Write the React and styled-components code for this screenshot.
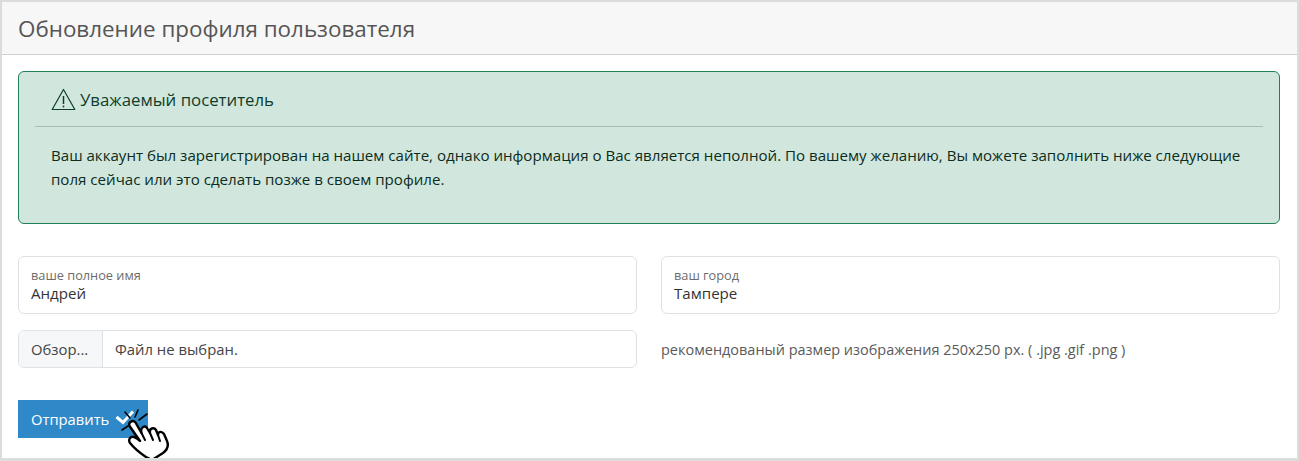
import React from "react";
import styled, { createGlobalStyle } from "styled-components";

const Global = createGlobalStyle`
  html, body { margin: 0; padding: 0; background: #dcdcdc; }
  body { font-family: "Open Sans", "Noto Sans", "Liberation Sans", sans-serif; color: #212529; }
  * { box-sizing: border-box; }
`;

const Card = styled.div`
  width: 1299px;
  height: 461px;
  padding: 2px 2px 3px 2px;
  background: #dcdcdc;
`;
const Inner = styled.div`
  height: 100%;
  display: flex;
  flex-direction: column;
  background: #fff;
  overflow: hidden;
`;
const Header = styled.div`
  height: 53px;
  flex: none;
  padding: 0 16px;
  display: flex;
  align-items: center;
  background: #f7f7f7;
  border-bottom: 1px solid #d0d0d0;
`;
const Title = styled.h1`
  margin: 0;
  font-size: 22.4px;
  font-weight: 400;
  color: #555;
`;
const Body = styled.div`
  flex: 1;
  padding: 16px 17px 0 16px;
  display: flex;
  flex-direction: column;
`;
const Alert = styled.div`
  height: 153px;
  flex: none;
  border: 1px solid #218056;
  border-radius: 6px;
  background: #d1e7dd;
  color: #0f3d2b;
  padding: 0 16px;
  display: flex;
  flex-direction: column;
`;
const AlertHead = styled.div`
  height: 55px;
  flex: none;
  padding-left: 16px;
  display: flex;
  align-items: center;
  gap: 4px;
  font-size: 16.8px;
  border-bottom: 1px solid #a3bfb3;
`;
const AlertText = styled.p`
  margin: 16px 0 0;
  padding-left: 16px;
  font-size: 15.1px;
  line-height: 24px;
  color: #0c2c20;
`;
const Row = styled.div`
  display: grid;
  grid-template-columns: 619px 619px;
  column-gap: 24px;
  align-items: center;
  margin-top: ${p => p.$top}px;
`;
const Field = styled.div`
  height: 58px;
  border: 1px solid #dee2e6;
  border-radius: 6px;
  padding: 10px 12px 0;
  display: flex;
  flex-direction: column;
`;
const FieldLabel = styled.span`
  font-size: 12.75px;
  line-height: 16px;
  color: #6c6c6c;
`;
const FieldValue = styled.span`
  font-size: 15.1px;
  line-height: 21px;
  color: #333;
`;
const FileBox = styled.div`
  height: 38px;
  border: 1px solid #dee2e6;
  border-radius: 6px;
  display: flex;
  align-items: center;
  overflow: hidden;
  font-size: 14.85px;
  color: #444;
`;
const FileButton = styled.span`
  width: 84px;
  height: 100%;
  display: flex;
  align-items: center;
  padding-left: 12px;
  background: #f6f7f9;
  border-right: 1px solid #dee2e6;
`;
const FileName = styled.span`
  padding-left: 12px;
`;
const Hint = styled.span`
  font-size: 14.47px;
  color: #5a5a5a;
`;
const SubmitWrap = styled.div`
  position: relative;
  margin-top: 32px;
  width: 130px;
`;
const Submit = styled.button`
  width: 130px;
  height: 38px;
  border: 0;
  padding: 0 0 0 13px;
  display: flex;
  align-items: center;
  background: #2f89c8;
  color: #fff;
  font: inherit;
  font-size: 14.75px;
`;
const Cursor = styled.svg`
  position: absolute;
  left: 90px;
  top: 5px;
  width: 70px;
  height: 56px;
`;

const Warning = () => (
  <svg width="25" height="23" viewBox="0 0 25 23" fill="none" stroke="#0f3d2b">
    <path d="M12.5 1.5 L23.8 21.5 H1.2 Z" strokeWidth="1.2" strokeLinejoin="round" />
    <path d="M12.5 8 V16" strokeWidth="1.5" />
    <path d="M12.5 17.6 V19.4" strokeWidth="1.5" />
  </svg>
);

const Hand = () => (
  <Cursor viewBox="108 405 70 56" fill="none">
    <path d="M116.5 417 L123 422.5 L133 411.5" stroke="#fff" strokeWidth="3" />
    <g stroke="#000" strokeWidth="1.6" strokeLinecap="round">
      <path d="M125 412 L130 418" />
      <path d="M138 410 L135 417" />
      <path d="M147 414 L139 420" />
      <path d="M122 430 L128 426" />
    </g>
    <path
      d="M129.5 426 C128 422 133 419.5 135.5 422.5 L141.5 433 C140 427 145 425 147 428 L150 433 C149 428 154 427 156 430 L158 435 C158 431 162 431 164 434 L167 441 C169 446 167 450 163 453 L152 460 L146 457 C140 453 134 448 130 443 C128 440 130 436 134 437 C136 437.5 138 439 140 441 Z"
      fill="#fff"
      stroke="#000"
      strokeWidth="2.4"
      strokeLinejoin="round"
    />
    <path d="M141.5 433 L145 440 M150 433 L153 440 M158 435 L160 441" stroke="#000" strokeWidth="2" strokeLinecap="round" />
  </Cursor>
);

export default function App() {
  return (
    <>
      <Global />
      <Card>
        <Inner>
          <Header>
            <Title>Обновление профиля пользователя</Title>
          </Header>
          <Body>
            <Alert>
              <AlertHead>
                <Warning />
                Уважаемый посетитель
              </AlertHead>
              <AlertText>
                Ваш аккаунт был зарегистрирован на нашем сайте, однако информация о Вас является неполной. По вашему желанию, Вы можете заполнить ниже следующие поля сейчас или это сделать позже в своем профиле.
              </AlertText>
            </Alert>
            <Row $top={32}>
              <Field>
                <FieldLabel>ваше полное имя</FieldLabel>
                <FieldValue>Андрей</FieldValue>
              </Field>
              <Field>
                <FieldLabel>ваш город</FieldLabel>
                <FieldValue>Тампере</FieldValue>
              </Field>
            </Row>
            <Row $top={16}>
              <FileBox>
                <FileButton>Обзор...</FileButton>
                <FileName>Файл не выбран.</FileName>
              </FileBox>
              <Hint>рекомендованый размер изображения 250x250 px. ( .jpg .gif .png )</Hint>
            </Row>
            <SubmitWrap>
              <Submit>Отправить</Submit>
              <Hand />
            </SubmitWrap>
          </Body>
        </Inner>
      </Card>
    </>
  );
}
